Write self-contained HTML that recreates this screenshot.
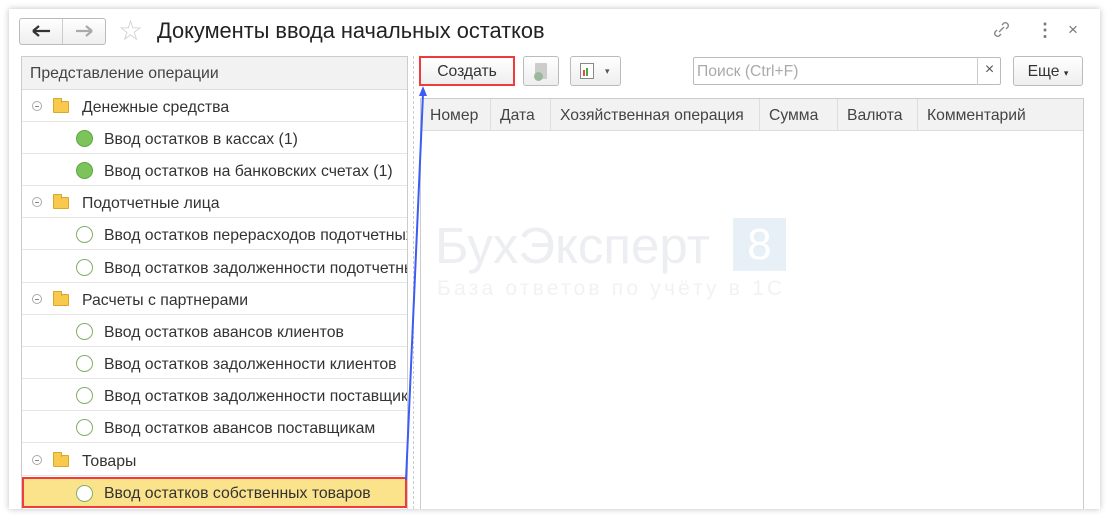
<!DOCTYPE html>
<html><head><meta charset="utf-8"><style>
*{box-sizing:border-box;margin:0;padding:0}
body{width:1110px;height:519px;background:#fff;font-family:"Liberation Sans",sans-serif;position:relative;overflow:hidden;color:#333}
.win{position:absolute;left:9px;top:9px;width:1091px;height:500px;background:#fff;box-shadow:0 0 6px rgba(0,0,0,.25)}
.a{position:absolute}
.row{position:absolute;left:22px;width:385px;height:32px;border-bottom:1px solid #e6e6e6;font-size:15.8px;line-height:32px;white-space:nowrap;overflow:hidden}
.row span{position:absolute;top:2px}
.c{position:absolute;left:54px;top:8px;width:17px;height:17px;border-radius:50%;border:1.5px solid #7fb069;background:#fff}
.g{background:#7dc35b;border-color:#5da83f}
.f{position:absolute;left:31px;top:11px;width:16px;height:12px;background:#f9c94d;border:1px solid #d9a72a;border-radius:1px}
.f:before{content:"";position:absolute;left:-1px;top:-4px;width:7px;height:4px;background:#f9c94d;border:1px solid #d9a72a;border-bottom:none;border-radius:1px 1px 0 0}
.m{position:absolute;left:10px;top:11px;width:10px;height:10px;border:1px solid #aaa;border-radius:50%}
.m:after{content:"";position:absolute;left:2px;top:3.5px;width:4px;height:1px;background:#888}
.th{position:absolute;top:99px;height:32px;line-height:34px;font-size:15.7px;border-right:1px solid #ddd;padding-left:9px;color:#444;white-space:nowrap}
.btn{position:absolute;border:1px solid #bbb;border-radius:3px;background:linear-gradient(#fff,#eee);font-size:15.7px;text-align:center}
</style></head><body>
<div class="win"></div>
<div class="btn" style="left:19px;top:18px;width:87px;height:27px"></div>
<div class="a" style="left:62px;top:19px;width:1px;height:25px;background:#ccc"></div>
<svg class="a" style="left:0;top:0" width="120" height="60"><path d="M33 31 H50 M33 31 L39 26 M33 31 L39 36" stroke="#333" stroke-width="2.2" fill="none"/><path d="M76 31 H92 M92 31 L86 26 M92 31 L86 36" stroke="#aaa" stroke-width="2.2" fill="none"/></svg>
<div class="a" style="left:118px;top:14px;font-size:28px;color:#ccc">☆</div>
<div class="a" style="left:157px;top:18px;font-size:21.8px;color:#222">Документы ввода начальных остатков</div>
<svg class="a" style="left:990px;top:18px" width="24" height="24"><path d="M9 14 L14 9 M7 12 l-2 2 a3 3 0 0 0 4 4 l2-2 M16 11 l2-2 a3 3 0 0 0 -4 -4 l-2 2" stroke="#888" stroke-width="1.4" fill="none"/></svg>
<div class="a" style="left:1036px;top:20px;font-size:18px;color:#777;font-weight:bold">⋮</div>
<div class="a" style="left:1068px;top:20px;font-size:17px;color:#777">×</div>
<div class="a" style="left:21px;top:56px;width:387px;height:453px;border:1px solid #ccc;border-bottom:none"></div>
<div class="a" style="left:22px;top:57px;width:385px;height:33px;background:#f2f2f2;border-bottom:1px solid #ddd;font-size:15.8px;line-height:33px;padding-left:8px;color:#444">Представление операции</div>
<div class="row" style="top:90px"><i class="m"></i><i class="f"></i><span style="left:60px">Денежные средства</span></div>
<div class="row" style="top:122px"><i class="c g"></i><span style="left:82px">Ввод остатков в кассах (1)</span></div>
<div class="row" style="top:154px"><i class="c g"></i><span style="left:82px">Ввод остатков на банковских счетах (1)</span></div>
<div class="row" style="top:186px"><i class="m"></i><i class="f"></i><span style="left:60px">Подотчетные лица</span></div>
<div class="row" style="top:218px"><i class="c"></i><span style="left:82px">Ввод остатков перерасходов подотчетных лиц</span></div>
<div class="row" style="top:251px"><i class="c"></i><span style="left:82px">Ввод остатков задолженности подотчетных лиц</span></div>
<div class="row" style="top:283px"><i class="m"></i><i class="f"></i><span style="left:60px">Расчеты с партнерами</span></div>
<div class="row" style="top:315px"><i class="c"></i><span style="left:82px">Ввод остатков авансов клиентов</span></div>
<div class="row" style="top:347px"><i class="c"></i><span style="left:82px">Ввод остатков задолженности клиентов</span></div>
<div class="row" style="top:379px"><i class="c"></i><span style="left:82px">Ввод остатков задолженности поставщикам</span></div>
<div class="row" style="top:411px"><i class="c"></i><span style="left:82px">Ввод остатков авансов поставщикам</span></div>
<div class="row" style="top:444px"><i class="m"></i><i class="f"></i><span style="left:60px">Товары</span></div>
<div class="row" style="top:477px;background:#fbe38c;border:2px solid #f03c3c;left:22px;height:31px;line-height:28px"><i class="c" style="left:52px;top:6px"></i><span style="left:80px;top:1px">Ввод остатков собственных товаров</span></div>
<div class="a" style="left:413px;top:56px;width:0;height:453px;border-left:1px dashed #ccc"></div>
<div class="btn" style="left:419px;top:56px;width:96px;height:30px;border:2px solid #ef3b3b;border-radius:0;line-height:28px">Создать</div>
<div class="btn" style="left:523px;top:56px;width:36px;height:30px"><div class="a" style="left:11px;top:6px;width:12px;height:16px;background:#ccc;border-radius:1px"></div><div class="a" style="left:10px;top:15px;width:9px;height:9px;border-radius:50%;background:#9bb89b"></div></div>
<div class="btn" style="left:570px;top:56px;width:51px;height:30px"><div class="a" style="left:9px;top:6px;width:14px;height:16px;border:1px solid #888;background:#fff"></div><div class="a" style="left:12px;top:13px;width:2px;height:6px;background:#e44"></div><div class="a" style="left:15px;top:11px;width:2px;height:8px;background:#4a4"></div><div class="a" style="left:34px;top:9px;font-size:9px;color:#555">▾</div></div>
<div class="a" style="left:693px;top:57px;width:308px;height:28px;border:1px solid #bbb;border-radius:2px;font-size:15.7px;color:#aaa;line-height:27px;padding-left:3px">Поиск (Ctrl+F)</div>
<div class="a" style="left:977px;top:57px;width:24px;height:28px;border-left:1px solid #ccc;font-size:16px;color:#555;text-align:center;line-height:26px">×</div>
<div class="btn" style="left:1013px;top:56px;width:70px;height:30px;line-height:29px;color:#333">Еще <span style="font-size:9px">▾</span></div>
<div class="a" style="left:420px;top:98px;width:664px;height:411px;border:1px solid #ccc;border-bottom:none"></div>
<div class="a" style="left:421px;top:99px;width:662px;height:32px;background:#f2f2f2;border-bottom:1px solid #ddd"></div>
<div class="th" style="left:421px;width:70px">Номер</div>
<div class="th" style="left:491px;width:60px">Дата</div>
<div class="th" style="left:551px;width:209px">Хозяйственная операция</div>
<div class="th" style="left:760px;width:78px">Сумма</div>
<div class="th" style="left:838px;width:80px">Валюта</div>
<div class="th" style="left:918px;width:165px;border-right:none">Комментарий</div>
<div class="a" style="left:435px;top:216px;font-size:51px;color:#eceef2">БухЭксперт</div>
<div class="a" style="left:733px;top:218px;width:53px;height:53px;background:#e8f0f7;color:#fff;font-size:44px;text-align:center;line-height:53px">8</div>
<div class="a" style="left:437px;top:277px;font-size:21px;color:#f1f2f5;letter-spacing:3.2px">База ответов по учёту в 1С</div>
<svg class="a" style="left:0;top:0" width="1110" height="519"><line x1="406" y1="480" x2="423" y2="94" stroke="#3d5cf5" stroke-width="2"/><path d="M423 86 L419 96 L427 96 Z" fill="#3d5cf5"/></svg>
</body></html>
